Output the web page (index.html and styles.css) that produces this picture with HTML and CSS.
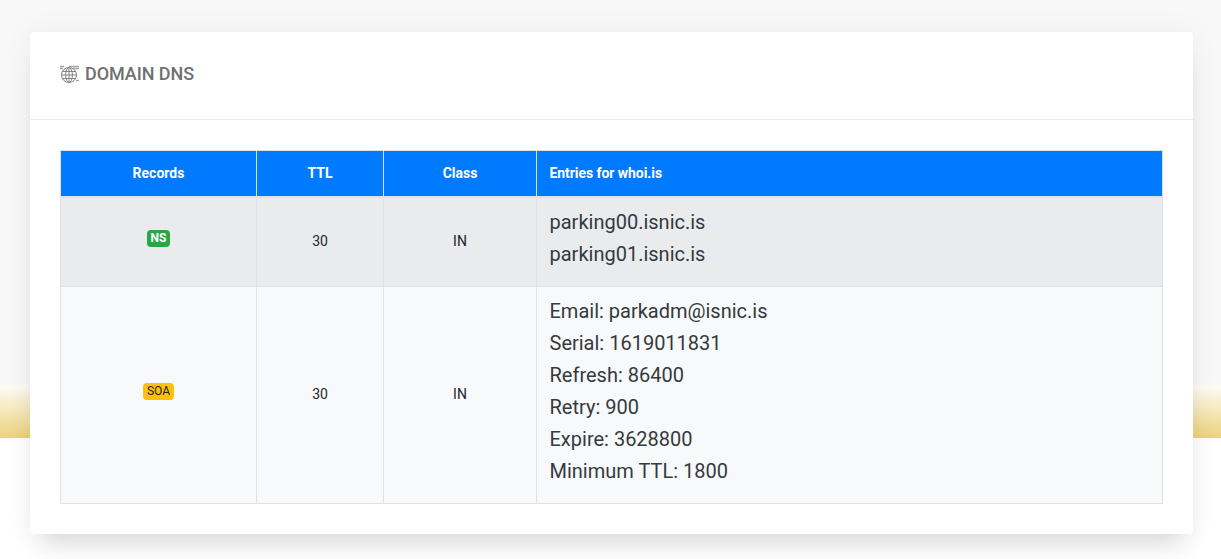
FILE: index.html
```html
<!DOCTYPE html>
<html lang="en">
<head>
<meta charset="utf-8">
<title>Domain DNS</title>
<link rel="stylesheet" href="styles.css">
</head>
<body>
<main class="page">
  <section class="card">
    <header class="card-head">
      <svg class="globe" width="19" height="18" viewBox="0 0 19 18" fill="none" stroke="#858585" stroke-width="1">
        <circle cx="9" cy="10" r="7.5"/>
        <ellipse cx="9" cy="10" rx="3.4" ry="7.5"/>
        <path d="M9 2.5v15M1.5 10h15M2.5 6.5h13M2.5 13.5h13"/>
        <path d="M0 1.5h4M0 3.5h3M9 1.5h10M13 3.5h6M16 15.5h3" stroke="#a8a8a8" stroke-width="1.5"/>
      </svg>
      <h2 class="card-title">DOMAIN DNS</h2>
    </header>
    <div class="card-body">
      <table class="dns">
        <colgroup>
          <col class="c1"><col class="c2"><col class="c3"><col class="c4">
        </colgroup>
        <thead>
          <tr>
            <th>Records</th>
            <th>TTL</th>
            <th>Class</th>
            <th class="left">Entries for whoi.is</th>
          </tr>
        </thead>
        <tbody>
          <tr class="row-dark">
            <td><span class="badge ns">NS</span></td>
            <td>30</td>
            <td>IN</td>
            <td class="entries">parking00.isnic.is<br>parking01.isnic.is</td>
          </tr>
          <tr class="row-light">
            <td><span class="badge soa">SOA</span></td>
            <td>30</td>
            <td>IN</td>
            <td class="entries">Email: parkadm@isnic.is<br>Serial: 1619011831<br>Refresh: 86400<br>Retry: 900<br>Expire: 3628800<br>Minimum TTL: 1800</td>
          </tr>
        </tbody>
      </table>
    </div>
  </section>
</main>
</body>
</html>
```
FILE: styles.css
```css
* { box-sizing: border-box; }
html, body { margin: 0; height: 100%; }
body {
  font-family: Roboto, "Liberation Sans", sans-serif;
  color: #212529;
  background: linear-gradient(to bottom,
    #f8f8f8 0, #f8f8f8 382px, #fdfcf6 386px, #ecd27a 438px, #fff 438px, #fff 100%);
  overflow: hidden;
}
.page { padding: 32px 28px 0 30px; }
.card {
  height: 502px;
  background: #fff;
  border-radius: 4px;
  box-shadow: 0 0 30px rgba(0, 0, 0, .05), 0 20px 25px -10px rgba(0, 0, 0, .13);
}
.card-head {
  height: 88px;
  padding: 0 30px 4px;
  display: flex;
  align-items: center;
  gap: 6px;
  border-bottom: 1px solid #e9ecef;
}
.globe { flex: none; }
.card-title {
  margin: 0;
  font-size: 18px;
  font-weight: 500;
  letter-spacing: -.08px;
  color: #707070;
}
.card-body { padding: 30px 30px 0; }
.dns {
  width: 1103px;
  border-collapse: collapse;
  table-layout: fixed;
  font-size: 14px;
  text-align: center;
}
.c1 { width: 196px; }
.c2 { width: 127px; }
.c3 { width: 153px; }
.dns th, .dns td {
  border: 1px solid #dee2e6;
  padding: 0 12px 2px;
  vertical-align: middle;
}
.dns th {
  height: 46px;
  padding-bottom: 0;
  background: #007bff;
  color: #fff;
  font-weight: 700;
  border-bottom-width: 2px;
}
.dns .left { text-align: left; padding-left: 12.5px; letter-spacing: -.06px; }
.row-dark td { background: #e9ebed; height: 90px; }
.row-light td { background: #f8f9fa; height: 217px; }
.dns .entries {
  text-align: left;
  padding: 0 12px 8px 12.5px;
  font-size: 20px;
  line-height: 32px;
  color: #343a40;
}
.badge {
  display: inline-block;
  position: relative;
  top: -3px;
  padding: 3px 4px;
  font-size: 12px;
  line-height: 11px;
  border-radius: 4px;
}
.ns { background: #28a745; color: #fff; font-weight: 700; }
.soa { background: #ffc107; color: #212529; font-weight: 400; }
```
